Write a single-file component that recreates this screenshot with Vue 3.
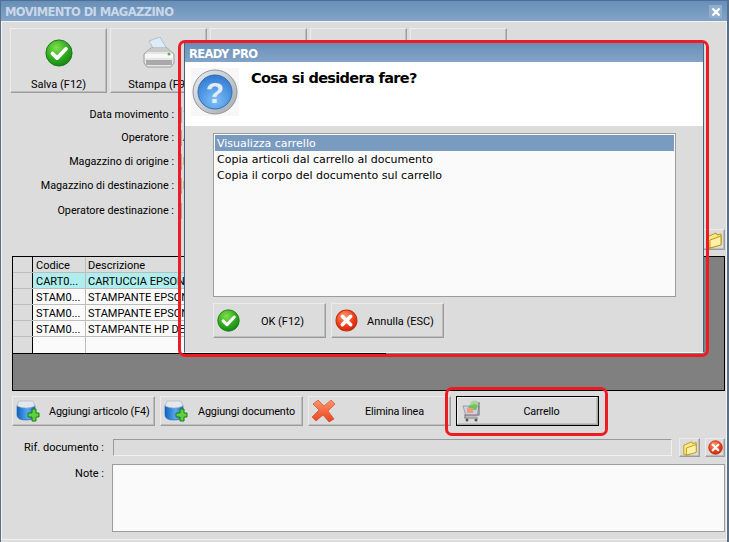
<script setup>
const tools = [
  { label: 'Salva (F12)', icon: 'check' },
  { label: 'Stampa (F9)', icon: 'printer' },
  { label: '', icon: '' },
  { label: '', icon: '' },
  { label: '', icon: '' }
]
const fields = [
  { label: 'Data movimento :', value: '1', cls: 'r1' },
  { label: 'Operatore :', value: 'A', cls: 'r2' },
  { label: 'Magazzino di origine :', value: 'M', cls: 'r3' },
  { label: 'Magazzino di destinazione :', value: 'D', cls: 'r4' },
  { label: 'Operatore destinazione :', value: '', cls: 'r5' }
]
const rows = [
  { code: 'CART0...', desc: 'CARTUCCIA EPSON', on: true },
  { code: 'STAM0...', desc: 'STAMPANTE EPSON' },
  { code: 'STAM0...', desc: 'STAMPANTE EPSON' },
  { code: 'STAM0...', desc: 'STAMPANTE HP DESKJET' },
  { code: '', desc: '' }
]
const options = ['Visualizza carrello', 'Copia articoli dal carrello al documento', 'Copia il corpo del documento sul carrello']
</script>

<template>
  <div class="win">
    <header class="title">
      <span>MOVIMENTO DI MAGAZZINO</span>
      <span class="close">
        <svg width="10" height="10" viewBox="0 0 10 10"><path d="M1.5 1.5l7 7M8.500 1.500l-7 7" stroke="#fff" stroke-width="2.400" /></svg>
      </span>
    </header>

    <div class="content">
      <div class="toolbar">
        <button v-for="(t, i) in tools" :key="i" class="btn tool">
          <svg v-if="t.icon === 'check'" class="tool-icon" width="28" height="28" viewBox="0 0 30 30">
            <circle cx="15" cy="15" r="14" fill="url(#gGreen)" stroke="#12780f" />
            <path d="M8 15.500l5 5 9.500-10" fill="none" stroke="#fff" stroke-width="4" stroke-linecap="round" stroke-linejoin="round" />
          </svg>
          <svg v-else-if="t.icon === 'printer'" class="tool-icon printer" width="32" height="31" viewBox="0 0 32 31">
            <path d="M6 4l11-4 7 12-12 3z" fill="#dcebf5" stroke="#9fb3c0" stroke-width=".7" />
            <path d="M1 17l7-6h16l7 6v9l-3 4H4l-3-4z" fill="#e6e6e6" stroke="#8d8d8d" stroke-width=".8" />
            <path d="M2 17h28v4H2z" fill="#f8f8f8" />
            <path d="M3 23h26v5H3z" fill="#a9a9a9" />
            <path d="M8 11h16l3 4H5z" fill="#c9c9c9" />
            <circle cx="26" cy="17" r="1.500" fill="#59b548" />
          </svg>
          <span v-if="t.label" class="tool-label">{{ t.label }}</span>
        </button>
      </div>

      <div class="form">
        <div v-for="f in fields" :key="f.label" class="frow" :class="f.cls">
          <label>{{ f.label }}</label>
          <span class="fval">{{ f.value }}</span>
        </div>
      </div>

      <div class="folder-row">
        <button class="btn mini">
          <svg width="18" height="18" viewBox="0 0 18 18"><path d="M2 6l9-4 1 2 4-1v10l-11 4-3-1z" fill="#fbe88a" stroke="#b8960f" /><path d="M5 9l11-4v9l-11 3z" fill="#fff2a8" stroke="#b8960f" /></svg>
        </button>
      </div>

      <div class="grid">
        <div class="grow head">
          <span class="rh"></span>
          <span class="c1">Codice</span>
          <span class="c2">Descrizione</span>
        </div>
        <div v-for="(r, i) in rows" :key="i" class="grow" :class="{ on: r.on }">
          <span class="rh"></span>
          <span class="c1">{{ r.code }}</span>
          <span class="c2">{{ r.desc }}</span>
        </div>
      </div>

      <div class="actions">
        <button class="btn act">
          <svg class="act-icon" width="24" height="24" viewBox="0 0 24 24">
            <path d="M1 7q0-3 9-3t9 3v9q0 5-9 5t-9-5z" fill="url(#gBlue)" stroke="#1a5ca8" stroke-width=".6" />
            <path d="M3 2h14l2 5q-9 4-18 0z" fill="#e4e8ee" stroke="#a8b0ba" stroke-width=".6" />
            <path d="M14 13h4v-4h4v4h3v4h-3v4h-4v-4h-4z" transform="translate(-2 1)" fill="#5ed13e" stroke="#1d7a16" />
          </svg>
          <span class="txt">Aggiungi articolo (F4)</span>
        </button>
        <button class="btn act">
          <svg class="act-icon" width="24" height="24" viewBox="0 0 24 24">
            <path d="M1 7q0-3 9-3t9 3v9q0 5-9 5t-9-5z" fill="url(#gBlue)" stroke="#1a5ca8" stroke-width=".6" />
            <path d="M3 2h14l2 5q-9 4-18 0z" fill="#e4e8ee" stroke="#a8b0ba" stroke-width=".6" />
            <path d="M14 13h4v-4h4v4h3v4h-3v4h-4v-4h-4z" transform="translate(-2 1)" fill="#5ed13e" stroke="#1d7a16" />
          </svg>
          <span class="txt doc">Aggiungi documento</span>
        </button>
        <button class="btn act">
          <svg class="act-icon" width="24" height="24" viewBox="0 0 24 24">
            <path d="M1 5l5-4 6 6 7-6 4 4-7 7 6 8-5 3-6-7-7 6-4-4 7-7z" fill="url(#gRedX)" stroke="#c9401a" stroke-width=".6" />
          </svg>
          <span class="txt mid">Elimina linea</span>
        </button>
        <button class="btn act cart">
          <svg class="act-icon" width="20" height="22" viewBox="0 0 20 22">
            <path d="M8 5a4 4 0 0 1 9 0" fill="#a9d79a" />
            <path d="M1 6h16l-2 10H4z" fill="#cfcdea" stroke="#8d8d9f" stroke-width=".8" />
            <path d="M6 6l7-2 3 2-2 4H7z" fill="#6fc35c" />
            <path d="M5 8h6v5H5z" fill="#ee9f78" />
            <path d="M17 2v13H3v3h13" fill="none" stroke="#777" stroke-width="1.200" />
            <circle cx="5" cy="20" r="1.500" fill="#555" /><circle cx="14" cy="20" r="1.500" fill="#555" />
          </svg>
          <span class="txt mid">Carrello</span>
        </button>
      </div>

      <div class="rif">
        <label>Rif. documento :</label>
        <span class="rif-input"></span>
        <button class="btn mini small">
          <svg width="16" height="16" viewBox="0 0 18 18"><path d="M2 6l9-4 1 2 4-1v10l-11 4-3-1z" fill="#fbe88a" stroke="#b8960f" /><path d="M5 9l11-4v9l-11 3z" fill="#fff2a8" stroke="#b8960f" /></svg>
        </button>
        <button class="btn mini small">
          <svg width="15" height="15" viewBox="0 0 22 22">
            <circle cx="11" cy="11" r="10" fill="url(#gRed)" stroke="#b3250c" />
            <path d="M7 7l8 8M15 7l-8 8" stroke="#fff" stroke-width="3.400" stroke-linecap="round" />
          </svg>
        </button>
      </div>

      <div class="note">
        <label>Note :</label>
        <span class="note-input"></span>
      </div>
    </div>

    <section class="dialog">
      <header class="dlg-title">READY PRO</header>
      <div class="dlg-head">
        <svg class="q" width="48" height="48" viewBox="0 0 48 48">
          <rect width="48" height="48" fill="#f7f7f7" />
          <circle cx="24" cy="24" r="22" fill="url(#gRing)" stroke="#8f9498" />
          <circle cx="24" cy="24" r="17" fill="url(#gQ)" stroke="#2f6db8" />
          <text x="24" y="35" class="qmark" text-anchor="middle">?</text>
        </svg>
        <h1>Cosa si desidera fare?</h1>
      </div>
      <div class="dlg-body">
        <ul class="list">
          <li v-for="(o, i) in options" :key="o" :class="{ sel: i === 0 }">{{ o }}</li>
        </ul>
        <div class="dlg-actions">
          <button class="btn dlg-btn">
            <svg width="23" height="23" viewBox="0 0 30 30">
              <circle cx="15" cy="15" r="14" fill="url(#gGreen)" stroke="#12780f" />
              <path d="M8 15.500l5 5 9.500-10" fill="none" stroke="#fff" stroke-width="4" stroke-linecap="round" stroke-linejoin="round" />
            </svg>
            <span>OK (F12)</span>
          </button>
          <button class="btn dlg-btn">
            <svg width="23" height="23" viewBox="0 0 22 22">
              <circle cx="11" cy="11" r="10" fill="url(#gRed)" stroke="#c0300f" />
              <path d="M7 7l8 8M15 7l-8 8" stroke="#fff" stroke-width="3.400" stroke-linecap="round" />
            </svg>
            <span>Annulla (ESC)</span>
          </button>
        </div>
      </div>
    </section>

    <div class="mark mark-dialog"></div>
    <div class="mark mark-cart"></div>

    <svg class="defs" width="0" height="0">
      <defs>
        <radialGradient id="gGreen" cx=".4" cy=".3" r=".8"><stop offset="0" stop-color="#7fe04a" /><stop offset=".6" stop-color="#2aa51d" /><stop offset="1" stop-color="#0d7d15" /></radialGradient>
        <radialGradient id="gRed" cx=".4" cy=".3" r=".8"><stop offset="0" stop-color="#ff9a68" /><stop offset=".6" stop-color="#ee3a1b" /><stop offset="1" stop-color="#c0200b" /></radialGradient>
        <linearGradient id="gRedX" x1="0" y1="0" x2="0" y2="1"><stop offset="0" stop-color="#ff9569" /><stop offset="1" stop-color="#e8421e" /></linearGradient>
        <linearGradient id="gBlue" x1="0" y1="0" x2="1" y2="0"><stop offset="0" stop-color="#0f63c2" /><stop offset=".6" stop-color="#5aa9ee" /><stop offset="1" stop-color="#1b6ec9" /></linearGradient>
        <linearGradient id="gRing" x1="0" y1="0" x2="1" y2="1"><stop offset="0" stop-color="#e8ecef" /><stop offset="1" stop-color="#a5abb0" /></linearGradient>
        <radialGradient id="gQ" cx=".5" cy=".75" r=".8"><stop offset="0" stop-color="#7cc0f8" /><stop offset="1" stop-color="#2a74cf" /></radialGradient>
      </defs>
    </svg>
  </div>
</template>

<style scoped>
.win {
  position: relative;
  width: 729px;
  height: 542px;
  overflow: hidden;
  box-sizing: border-box;
  display: flex;
  flex-direction: column;
  background: #dcdcdc;
  border-left: 1px solid #5a6f88;
  border-right: 2px solid #5a6f88;
  font: 11px Roboto, "Open Sans", sans-serif;
  color: #000;
}
.title {
  height: 22px;
  flex: none;
  box-sizing: border-box;
  padding: 4px 4px 0 4px;
  display: flex;
  justify-content: space-between;
  background: linear-gradient(#688fb8, #84a4c7);
  border-top: 1px solid #4d6f96;
  border-bottom: 1px solid #f2f2f2;
  color: #c9d8e8;
  font: bold 11.500px "DejaVu Sans", sans-serif;
  letter-spacing: -0.6px;
}
.close {
  width: 13px;
  height: 13px;
  margin: 0 1px 0 0;
  display: flex;
  align-items: center;
  justify-content: center;
  background: #8fadcc;
}
.content {
  flex: 1;
  display: flex;
  flex-direction: column;
  min-height: 0;
  margin-bottom: 2px;
  border-left: 1px solid #f2f2f2;
  border-right: 1px solid #f2f2f2;
  border-bottom: 1px solid #f2f2f2;
}
.btn {
  box-sizing: border-box;
  padding: 0;
  font: inherit;
  color: inherit;
  background: #dcdcdc;
  border: 1px solid;
  border-color: #ececec #9c9c9c #9c9c9c #ececec;
  box-shadow: inset -1px -1px 0 #bcbcbc;
}
.toolbar {
  display: flex;
  gap: 3px;
  padding: 6px 0 0 8px;
}
.tool {
  width: 97px;
  height: 65px;
  display: flex;
  flex-direction: column;
  align-items: center;
  position: relative;
}
.tool-icon {
  position: absolute;
  top: 10px;
}
.tool-icon.printer {
  top: 8px;
}
.tool-label {
  position: absolute;
  top: 49px;
  white-space: nowrap;
}
.form {
  padding-top: 14px;
}
.frow {
  display: flex;
  height: 16px;
  line-height: 16px;
}
.frow label {
  width: 172px;
  font-size: 10.800px;
  text-align: right;
  white-space: nowrap;
}
.fval {
  width: 100px;
  margin-left: 7px;
  padding-left: 1px;
  border-left: 1px solid #a8a8a8;
  overflow: hidden;
}
.r2, .r3, .r4 { margin-top: 8px; }
.r2 { margin-top: 7px; }
.r5 { margin-top: 9px; }
.folder-row {
  display: flex;
  justify-content: flex-end;
  padding: 10px 1px 0 0;
}
.mini {
  width: 22px;
  height: 21px;
  display: flex;
  align-items: center;
  justify-content: center;
}
.grid {
  margin: 6px 1px 0 10px;
  height: 135px;
  flex: none;
  box-sizing: border-box;
  border: 1px solid #000;
  background: #808080;
}
.grow {
  display: flex;
  width: 373px;
  height: 16px;
  line-height: 17px;
  background: #fafafa;
  border-bottom: 1px solid #bdbdbd;
  box-sizing: border-box;
}
.grow:last-child {
  height: 17px;
  border-bottom: 1px solid #000;
}
.grow span {
  box-sizing: border-box;
  padding-left: 3px;
  overflow: hidden;
  white-space: nowrap;
  border-right: 1px solid #bdbdbd;
}
.grow .rh {
  width: 20px;
  flex: none;
  background: #dcdcdc;
  border-right: 1px solid #000;
}
.c1 { width: 53px; flex: none; }
.grow .c2 { width: 300px; flex: none; padding-left: 2px; }
.head { background: #dcdcdc; }
.on { background: #aeeeee; }
.actions {
  display: flex;
  gap: 5px;
  margin: 5px 0 0 10px;
}
.act {
  width: 143px;
  height: 30px;
  display: flex;
  align-items: center;
  gap: 9px;
  padding-left: 3px;
  white-space: nowrap;
  font-size: 10.800px;
  letter-spacing: -0.15px;
}
.act .act-icon { flex: none; }
.act .txt { padding-top: 1px; }
.act .mid { flex: 1; padding-right: 6px; text-align: center; }
.act .doc { margin-left: 1px; }
.cart {
  border: 1px solid #000;
  box-shadow: inset -1px -1px 0 #a8a8a8, inset 1px 1px 0 #f0f0f0, inset -2px -2px 0 #c0c0c0;
  padding-left: 5px;
}
.rif {
  display: flex;
  align-items: center;
  height: 19px;
  margin-top: 12px;
}
.rif label, .note label {
  width: 102px;
  text-align: right;
  white-space: nowrap;
  flex: none;
}
.rif-input {
  width: 559px;
  height: 17px;
  margin-left: 9px;
  box-sizing: border-box;
  border: 1px solid;
  border-color: #9a9a9a #f0f0f0 #f0f0f0 #9a9a9a;
}
.small { width: 21px; height: 19px; margin-left: 7px; }
.small + .small { margin-left: 5px; width: 20px; }
.note {
  display: flex;
  margin-top: 7px;
  align-items: flex-start;
}
.note label { padding-top: 3px; }
.note-input {
  width: 613px;
  height: 68px;
  margin-left: 8px;
  box-sizing: border-box;
  background: #fafafa;
  border: 1px solid #9c9c9c;
}
.dialog {
  position: absolute;
  left: 183px;
  top: 43px;
  width: 520px;
  height: 310px;
  box-sizing: border-box;
  display: flex;
  flex-direction: column;
  background: #dcdcdc;
  border-left: 1px solid #4d6180;
  border-right: 1px solid #4d6180;
  border-bottom: 1px solid #f2f2f2;
}
.dlg-title {
  height: 19px;
  flex: none;
  box-sizing: border-box;
  padding: 3px 0 0 4px;
  background: linear-gradient(#688fb8, #84a4c7);
  color: #fff;
  font: bold 11.500px "DejaVu Sans", sans-serif;
  letter-spacing: -0.6px;
  line-height: 16px;
}
.dlg-head {
  height: 64px;
  flex: none;
  display: flex;
  align-items: flex-start;
  background: #fff;
}
.q {
  flex: none;
  margin: 6px 0 0 6px;
}
.qmark {
  font: bold 30px "Liberation Sans", sans-serif;
  fill: #e4ecf6;
}
.dlg-head h1 {
  margin: 7px 0 0 12px;
  font: bold 14.500px "DejaVu Sans", sans-serif;
  letter-spacing: -0.66px;
  line-height: 18px;
}
.dlg-body {
  flex: 1;
  padding: 7px 0 0 28px;
  display: flex;
  flex-direction: column;
}
.list {
  width: 463px;
  height: 164px;
  box-sizing: border-box;
  margin: 0;
  padding: 1px;
  list-style: none;
  background: #fafafa;
  border: 1px solid #9c9c9c;
  font: 11px "DejaVu Sans", sans-serif;
}
.list li {
  height: 16px;
  line-height: 17px;
  padding-left: 2px;
}
.list .sel {
  background: #7a9bc0;
  color: #fff;
}
.dlg-actions {
  display: flex;
  gap: 5px;
  margin-top: 6px;
}
.dlg-btn {
  width: 113px;
  height: 35px;
  display: flex;
  align-items: center;
  padding-left: 3px;
}
.dlg-btn span {
  flex: 1;
  padding-top: 1px;
  text-align: center;
}
.mark {
  position: absolute;
  box-sizing: border-box;
  border: 3px solid #ed1c24;
  border-radius: 7px;
  pointer-events: none;
}
.mark-dialog { left: 177px; top: 40px; width: 531px; height: 317px; }
.mark-cart { left: 444px; top: 387px; width: 163px; height: 49px; }
.defs { position: absolute; }
</style>
